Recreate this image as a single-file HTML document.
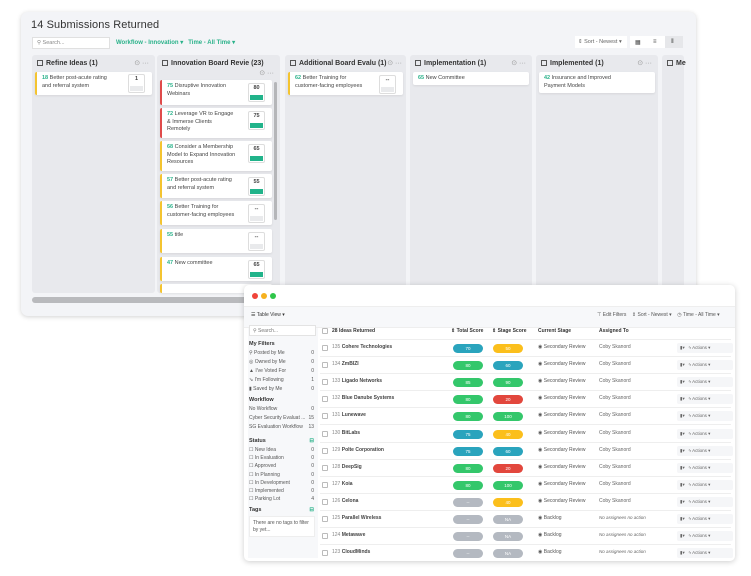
<!DOCTYPE html>
<html><head><meta charset="utf-8"><style>
*{box-sizing:border-box;margin:0;padding:0}
body{width:751px;height:576px;background:#fff;font-family:"Liberation Sans",sans-serif;position:relative;overflow:hidden;color:#333}
.a{position:absolute}
.back{left:21px;top:12px;width:675px;height:304px;background:#f3f4f7;border-radius:7px;box-shadow:0 1px 5px rgba(0,0,0,.18)}
.col{position:absolute;top:55px;height:238px;background:#e8e9ed;border-radius:3px}
.ch{position:absolute;top:5px;left:5px;font-size:7px;font-weight:bold;color:#333;white-space:nowrap}
.ch i{display:inline-block;width:6px;height:6px;border:1px solid #555;margin-right:3px;vertical-align:-1px}
.dots{position:absolute;font-size:7px;color:#999}
.card{position:absolute;background:#fff;border-radius:2px;box-shadow:0 1px 2px rgba(0,0,0,.08);font-size:5.5px;line-height:7.5px;color:#444;padding:3px 4px 0 5px}
.card b{color:#2ab28a;font-weight:bold}
.y{border-left:2px solid #f4c430}.r{border-left:2px solid #e04b4b}
.sc{position:absolute;right:7px;top:3px;width:17px;height:19px;border:1px solid #ddd;border-radius:2px;font-size:5.5px;font-weight:bold;text-align:center;line-height:9px;background:#fff}
.sc span{position:absolute;left:1px;right:1px;bottom:1px;height:5px;background:#21b38a}
.sc.g span{background:#e9eaec}
.front{left:244px;top:285px;width:491px;height:276px;background:#fff;border-radius:5px;box-shadow:0 1px 6px rgba(0,0,0,.2);overflow:hidden}
.sb{font-size:5px;color:#555}
.lst{position:absolute;left:5px;width:65px;font-size:5px;color:#555}
.lst div{height:9px}.lst span{float:right}
.lst.s div{height:8.2px}
.hd{font-weight:bold;color:#333;font-size:5.5px}
.row{position:absolute;left:76px;width:411px;height:17px;border-bottom:1px solid #eee;font-size:5px;color:#444}
.pill{position:absolute;top:4px;width:30px;height:9px;border-radius:5px;color:#fff;font-size:4.5px;text-align:center;line-height:9px}
.bl{background:#2aa4bd}.gr{background:#34c76b}.rd{background:#e2473d}.ye{background:#fbbf1c}.gy{background:#b4b9c1}
.cb{position:absolute;left:2px;top:5px;width:6px;height:6px;border:1px solid #bbb;border-radius:1px}
</style></head><body>
<div class="a back">
 <div class="a" style="left:10px;top:7px;font-size:11px;color:#333;letter-spacing:0.1px">14 Submissions Returned</div>
 <div class="a" style="left:11px;top:25px;width:78px;height:12px;background:#fff;border:1px solid #e0e0e0;font-size:5.5px;color:#888;padding:2px 4px">&#9906; Search...</div>
 <div class="a" style="left:95px;top:27px;font-size:6px;color:#2ab28a;font-weight:bold">Workflow - Innovation ▾ &nbsp;&nbsp;Time - All Time ▾</div>
 <div class="a" style="left:554px;top:24px;width:52px;height:12px;background:#fff;font-size:5.5px;color:#666;padding:3px 3px">⇕ Sort - Newest ▾</div>
 <div class="a" style="left:609px;top:24px;width:53px;height:12px;background:#fff"></div>
 <div class="a" style="left:644px;top:24px;width:18px;height:12px;background:#e6e7ea"></div>
 <div class="a" style="left:614px;top:27px;font-size:6px;color:#444">▦</div>
 <div class="a" style="left:632px;top:27px;font-size:6px;color:#444">≡</div>
 <div class="a" style="left:650px;top:27px;font-size:6px;color:#444">⦀</div>
 <div class="a" style="left:11px;top:285px;width:650px;height:6px;background:#b9babd;border-radius:3px"></div>
</div>
<div class="col" style="left:32px;width:123px"><div class="ch"><i></i>Refine Ideas (1)</div><div class="dots" style="right:6px;top:4px">⊙ ···</div>
 <div class="card y" style="left:3px;top:17px;width:117px;height:23px">
  <b>18</b> Better post-acute rating<br>and referral system<div class="sc g" style="top:2px">1<span></span></div></div></div>
<div class="col" style="left:157px;width:123px"><div class="ch"><i></i>Innovation Board Revie (23)</div><div class="dots" style="right:6px;top:14px">⊙ ···</div>
 <div class="a" style="left:117px;top:27px;width:3px;height:138px;background:#b5b6b9;border-radius:2px"></div>
 <div class="card r" style="left:3px;top:25px;width:112px;height:25px"><b>75</b> Disruptive Innovation<br>Webinars<div class="sc">80<span></span></div></div>
 <div class="card r" style="left:3px;top:53px;width:112px;height:30px"><b>72</b> Leverage VR to Engage<br>&amp; Immerse Clients<br>Remotely<div class="sc">75<span></span></div></div>
 <div class="card y" style="left:3px;top:86px;width:112px;height:30px"><b>68</b> Consider a Membership<br>Model to Expand Innovation<br>Resources<div class="sc">65<span></span></div></div>
 <div class="card y" style="left:3px;top:119px;width:112px;height:24px"><b>57</b> Better post-acute rating<br>and referral system<div class="sc">55<span></span></div></div>
 <div class="card y" style="left:3px;top:146px;width:112px;height:24px"><b>56</b> Better Training for<br>customer-facing employees<div class="sc g">--<span></span></div></div>
 <div class="card y" style="left:3px;top:174px;width:112px;height:24px"><b>55</b> title<div class="sc g">--<span></span></div></div>
 <div class="card y" style="left:3px;top:202px;width:112px;height:24px"><b>47</b> New committee<div class="sc">65<span></span></div></div>
 <div class="card y" style="left:3px;top:229px;width:112px;height:9px"></div></div>
<div class="col" style="left:285px;width:121px"><div class="ch"><i></i>Additional Board Evalu (1)</div><div class="dots" style="right:4px;top:4px">⊙ ···</div>
 <div class="card y" style="left:3px;top:17px;width:115px;height:23px"><b>62</b> Better Training for<br>customer-facing employees<div class="sc g">--<span></span></div></div></div>
<div class="col" style="left:410px;width:122px"><div class="ch"><i></i>Implementation (1)</div><div class="dots" style="right:6px;top:4px">⊙ ···</div>
 <div class="card" style="left:3px;top:17px;width:116px;height:13px"><b>65</b> New Committee</div></div>
<div class="col" style="left:536px;width:122px"><div class="ch"><i></i>Implemented (1)</div><div class="dots" style="right:6px;top:4px">⊙ ···</div>
 <div class="card" style="left:3px;top:17px;width:116px;height:21px"><b>42</b> Insurance and Improved<br>Payment Models</div></div>
<div class="col" style="left:662px;width:22px"><div class="ch"><i></i>Me</div></div>

<div class="a front">
 <div class="a" style="left:8px;top:8px;width:6px;height:6px;border-radius:50%;background:#f0443a"></div>
 <div class="a" style="left:17px;top:8px;width:6px;height:6px;border-radius:50%;background:#f6b11f"></div>
 <div class="a" style="left:26px;top:8px;width:6px;height:6px;border-radius:50%;background:#2fc64a"></div>
 <div class="a" style="left:0;top:21px;width:491px;height:22px;background:#f7f8fa;border-top:1px solid #eee;border-bottom:1px solid #eee"></div>
 <div class="a sb" style="left:7px;top:27px;color:#333">☰ Table View ▾</div>
 <div class="a sb" style="left:353px;top:27px;color:#555">⊤ Edit Filters &nbsp;&nbsp; ⇕ Sort - Newest ▾ &nbsp;&nbsp; ◷ Time - All Time ▾</div>
 <div class="a" style="left:4px;top:43px;width:70px;height:230px;background:#f7f8fa"></div>
 <div class="a sb" style="left:5px;top:40px;width:67px;height:11px;background:#fff;border:1px solid #e3e3e3;padding:2px 3px;color:#777">&#9906; Search...</div>
 <div class="lst" style="top:56px"><div class="hd">My Filters</div><div>⚲ Posted by Me<span>0</span></div><div>◎ Owned by Me<span>0</span></div><div>▲ I've Voted For<span>0</span></div><div>⇘ I'm Following<span>1</span></div><div>▮ Saved by Me<span>0</span></div></div>
 <div class="lst" style="top:112px"><div class="hd">Workflow</div><div>No Workflow<span>0</span></div><div>Cyber Security Evaluat ...<span>15</span></div><div>SG Evaluation Workflow<span>13</span></div></div>
 <div class="lst s" style="top:153px"><div class="hd" style="height:9px">Status<span style="color:#2ab28a">⊟</span></div><div>☐ New Idea<span>0</span></div><div>☐ In Evaluation<span>0</span></div><div>☐ Approved<span>0</span></div><div>☐ In Planning<span>0</span></div><div>☐ In Development<span>0</span></div><div>☐ Implemented<span>0</span></div><div>☐ Parking Lot<span>4</span></div></div>
 <div class="lst" style="top:222px"><div class="hd">Tags<span style="color:#2ab28a">⊟</span></div></div>
 <div class="a sb" style="left:5px;top:231px;width:66px;height:21px;background:#fff;border:1px solid #eee;padding:3px 3px;line-height:7px">There are no tags to filter by yet...</div>
 <div class="row" style="top:38px;font-weight:bold;color:#333"><div class="cb"></div><span class="a" style="left:12px;top:5px">28 Ideas Returned</span><span class="a" style="left:131px;top:5px">⇕ Total Score</span><span class="a" style="left:172px;top:5px">⇕ Stage Score</span><span class="a" style="left:218px;top:5px">Current Stage</span><span class="a" style="left:279px;top:5px">Assigned To</span></div>
</div>
<script>
var d=[["135 Cohere Technologies","bl","70","ye","50"],["134 ZmBIZI","gr","80","bl","60"],["133 Ligado Networks","gr","85","gr","90"],["132 Blue Danube Systems","gr","80","rd","20"],["131 Lunewave","gr","80","gr","100"],["130 BitLabs","bl","75","ye","40"],["129 Polte Corporation","bl","75","bl","60"],["128 DeepSig","gr","80","rd","20"],["127 Koia","gr","80","gr","100"],["126 Celona","gy","--","ye","40"],["125 Parallel Wireless","gy","--","gy","NA"],["124 Metawave","gy","--","gy","NA"],["123 CloudMinds","gy","--","gy","NA"]];
var f=document.querySelector('.front'),h='';
d.forEach(function(r,i){var bk=i>9;
h+='<div class="row" style="top:'+(55+i*17.1)+'px"><div class="cb"></div><span class="a" style="left:12px;top:4px"><span style="color:#888">'+r[0].split(' ')[0]+'</span> <b>'+r[0].slice(4)+'</b></span><div class="pill '+r[1]+'" style="left:133px">'+r[2]+'</div><div class="pill '+r[3]+'" style="left:173px">'+r[4]+'</div><span class="a" style="left:218px;top:4px;color:#555">◉ '+(bk?'Backlog':'Secondary Review')+'</span><span class="a" style="left:279px;top:4px;color:#666;'+(bk?'font-style:italic;font-size:4.5px':'')+'">'+(bk?'No assignees no action':'Coby Skanord')+'</span><span class="a" style="left:357px;top:3px;width:56px;height:10px;background:#f5f6f8;border-radius:2px;color:#666;padding:2px 3px;font-size:4.5px">▮▾ &nbsp;&nbsp;ϟ Actions ▾</span></div>';});
f.insertAdjacentHTML('beforeend',h);
</script>
</body></html>
